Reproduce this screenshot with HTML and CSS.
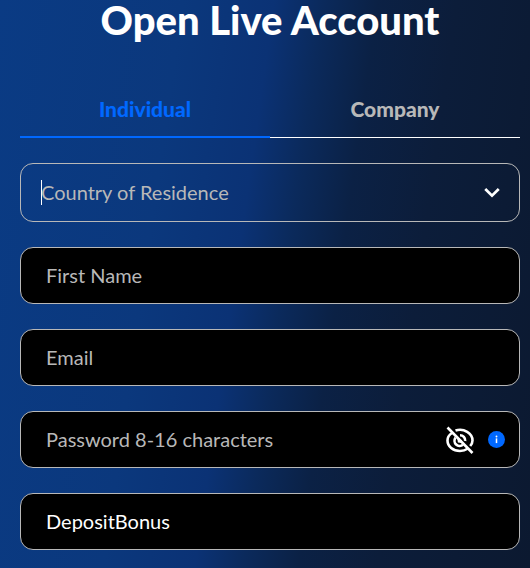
FILE: index.html
```html
<!DOCTYPE html>
<html lang="en">
<head>
  <meta charset="UTF-8" />
  <meta name="viewport" content="width=device-width, initial-scale=1.0" />
  <title>Open Live Account</title>
  <link rel="stylesheet" href="styles.css">
</head>

<body>
  <main class="signup">
    <h1>Open Live Account</h1>

    <div class="tabs" role="tablist">
      <button class="tab active" type="button" role="tab" aria-selected="true">Individual</button>
      <button class="tab" type="button" role="tab" aria-selected="false">Company</button>
    </div>

    <form class="form">
      <div class="field country">
        <select id="country" aria-label="Country of Residence">
          <option>Country of Residence</option>
        </select>
        <svg class="chevron" viewBox="0 0 20 20" aria-hidden="true">
          <path d="M2.5 5.5 L10 13 L17.5 5.5" />
        </svg>
      </div>

      <div class="field">
        <input id="firstName" type="text" placeholder="First Name" aria-label="First Name">
      </div>

      <div class="field">
        <input id="email" type="email" placeholder="Email" aria-label="Email">
      </div>

      <div class="field">
        <input id="password" type="password" placeholder="Password 8-16 characters" aria-label="Password">
        <button class="icon-btn" type="button" aria-label="Show password">
          <svg class="eye" viewBox="0 0 28 28" aria-hidden="true">
            <path d="M9.5 4.6 C18 1.8 26.5 7.5 26.5 14.5 C26.5 16.5 25.6 18.4 24.2 20" />
            <path d="M6 7 C3.2 8.8 1.5 11.3 1.5 14.5 C1.5 20.5 7.1 25 14 25 C16.8 25 19.4 24.3 21.5 22.8" />
            <path d="M14 9.3 A5.2 5.2 0 0 1 19.2 15" />
            <path d="M9.6 11.6 A5.2 5.2 0 0 0 17 18.8" />
            <path d="M12.6 12.6 L13 15.4 L15.8 15.6" />
            <path d="M1.5 1.5 L26.5 27" />
          </svg>
        </button>
        <button class="icon-btn" type="button" aria-label="Password rules">
          <svg class="info" viewBox="0 0 18 18" aria-hidden="true">
            <circle class="disc" cx="9" cy="9" r="9" />
            <circle class="mark" cx="9" cy="5.8" r="1" />
            <rect class="mark" x="8.2" y="7.8" width="1.6" height="5" />
          </svg>
        </button>
      </div>

      <div class="field">
        <input id="referral" type="text" value="DepositBonus" aria-label="Referral code">
      </div>
    </form>
  </main>
</body>
</html>
```
FILE: styles.css
```css
* {
  box-sizing: border-box;
}
body {
  margin: 0;
  min-height: 100vh;
  font-family: Lato, 'Open Sans', sans-serif;
  color: white;
  background: linear-gradient(98deg, #0a3b84 0%, #0b387d 30%, #0b3275 45%, #0b2a5c 53%, #0b2145 62%, #0c1d3a 75%, #0c1930 100%);
}
.signup {
  padding: 0 10px 18px 20px;
}
h1 {
  margin: 0;
  font-size: 40px;
  font-weight: 900;
  line-height: 41px;
  text-align: center;
}
.tabs {
  display: flex;
  align-items: flex-end;
  margin-top: 41px;
}
.tab {
  flex: 1;
  height: 56px;
  padding: 0 0 2px;
  border: none;
  border-bottom: 1px solid white;
  background: none;
  color: #b8b8b8;
  font-family: inherit;
  font-size: 21px;
  font-weight: 900;
  cursor: pointer;
}
.tab.active {
  border-bottom: 2px solid #0068ff;
  color: #0068ff;
}
.form {
  display: flex;
  flex-direction: column;
  gap: 25px;
  margin-top: 25px;
}
.field {
  display: flex;
  align-items: center;
  gap: 14px;
  height: 57px;
  padding: 0 14px 0 25px;
  border: 1px solid #b8b8b8;
  border-radius: 13px;
  background: black;
}
.country {
  position: relative;
  height: 59px;
  padding: 0 18px 0 20px;
  background: none;
}
/* text cursor at the start of the country box */
.country::before {
  content: "";
  position: absolute;
  left: 20px;
  width: 1px;
  height: 25px;
  background: white;
}
.field input,
.field select {
  flex: 1;
  min-width: 0;
  height: 100%;
  padding: 0 0 2px;
  border: none;
  outline: none;
  appearance: none;
  background: none;
  color: white;
  font-family: inherit;
  font-size: 20px;
}
.field select,
.field input::placeholder {
  color: #b8b8b8;
  opacity: 1;
}
.icon-btn {
  display: flex;
  padding: 0;
  border: none;
  background: none;
  cursor: pointer;
}
.chevron {
  width: 18px;
  height: 18px;
  fill: none;
  stroke: white;
  stroke-width: 3;
}
.eye {
  width: 28px;
  height: 28px;
  fill: none;
  stroke: white;
  stroke-width: 2.6;
}
.info {
  width: 17px;
  height: 17px;
}
.info .disc {
  fill: #0068ff;
}
.info .mark {
  fill: white;
}
```
